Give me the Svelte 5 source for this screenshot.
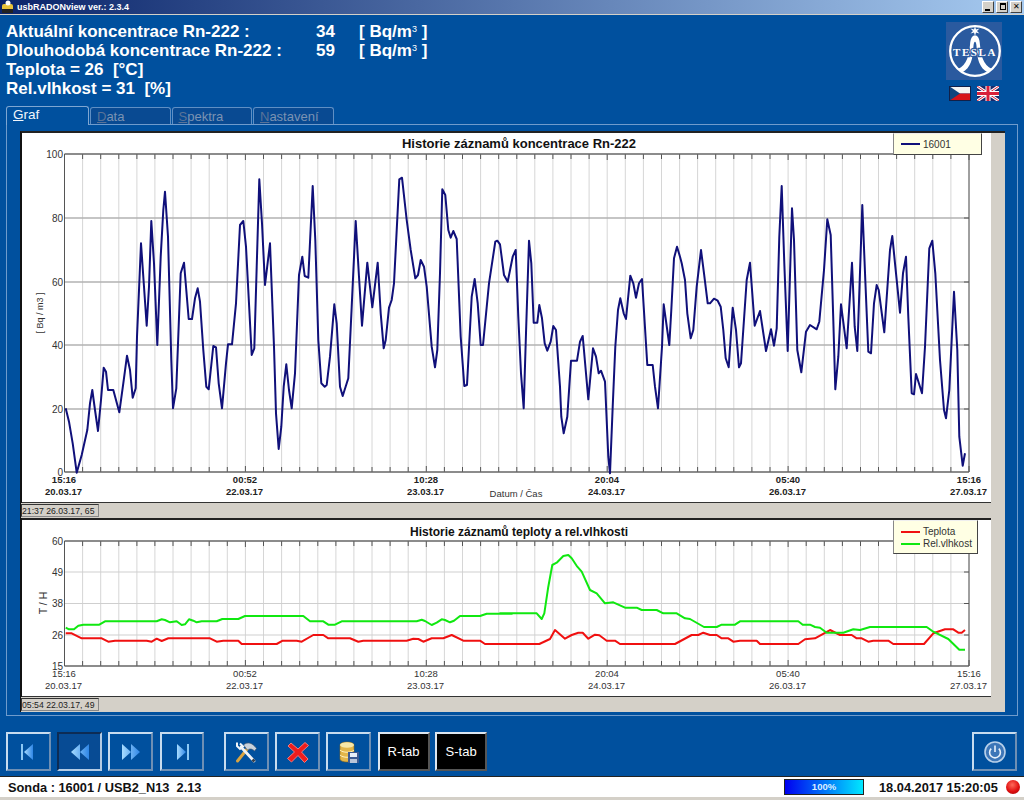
<script>
  // points read off the screen: [originX, originY, x*3, y*3, ...]
  function pts(groups) {
    return groups
      .map(([ox, oy, arr]) => {
        let out = [];
        for (let i = 0; i < arr.length; i += 2) {
          out.push((ox + arr[i] / 3).toFixed(1) + "," + (oy + arr[i + 1] / 3).toFixed(1));
        }
        return out.join(" ");
      })
      .join(" ");
  }

  const radon = pts([
    [0, 140, [197,805,207,845,218,910,230,998,245,945,262,870,270,790,277,750,285,810,294,873,303,780,311,683,318,695,324,750,340,750,358,817,370,730,381,647,390,690,398,773,407,745,411,590,423,310,432,440,440,557,447,440,454,243,462,370,472,615,482,350,490,210,495,155,504,290,514,660,519,805,529,745,542,400,552,368,566,537,576,537,585,475,593,445,600,485,610,630,619,740,626,748,640,618,648,622,656,730,666,805,678,670,684,613,696,613,708,490,720,255,730,243,738,320,755,645,763,625,770,380,778,118,786,250,795,435,810,310,822,620,828,820,836,927,844,860,851,740,859,673,867,750,875,805,885,700,897,405,907,350,914,408,925,413,938,138,946,300,955,600,964,730,974,740,980,735,990,650,1003,493,1010,550,1020,740]],
    [340, 140, [8,768,25,715,35,500,47,243,57,410,66,557,82,368,97,502,113,368,122,520,131,625,137,600,147,503,155,480,162,430,178,118,186,113,200,240,212,330,226,415,234,405,242,360,252,380,260,440,275,620,285,682,292,630,300,400,307,148,316,165,325,270,332,293,340,273,350,297,362,590,373,738,381,735,395,470,404,417,413,490,422,615,429,615,447,430,466,305,472,302,480,313,492,405,503,425,518,350,527,330,535,530,543,700,551,805,558,580,567,302,574,370,581,548,592,548,598,495,606,535,614,610,622,632,632,605,640,558,648,570,660,740,664,830,671,880,682,830,693,662,711,662,720,605,728,588,745,778,759,625,768,650,776,700,783,692,795,725,805,950,810,1000,818,800,826,620,834,510,841,475,851,520,858,537,871,407,880,430,888,473,897,430,906,417,922,675,938,675,945,740,954,805,966,620,971,493,988,615,994,510,1002,355,1011,320,1020,350]],
    [680, 130, [5,400,15,450,22,550,32,625,40,600,50,470,63,360,72,430,83,520,90,520,102,506,113,512,122,530,130,600,137,685,146,712,158,533,168,600,177,712,183,700,200,450,210,398,224,587,240,543,258,663,273,598,282,647,290,595,298,320,305,168,313,400,323,663,336,235,342,330,352,660,364,727,378,605,390,585,410,598,418,575,432,420,442,268,452,315,460,570,466,778,475,680,483,523,500,655,516,398,524,590,532,663,547,225,556,450,565,665,573,670,582,520,590,465,596,480,613,607,630,360,637,318,645,400,660,548,669,430,678,380,685,560,695,790,702,793,708,732,726,790,735,650,748,355,757,332,766,430,780,690,792,840,798,865,808,780,822,485,832,660,838,920,848,1007,855,970]]
  ]);

  const humidity = pts([
    [0, 530, [197,293,207,298,222,298,235,287,250,284,298,284,315,274,470,274,485,268,495,270,510,277,530,274,545,285,555,283,567,268,580,272,590,277,605,274,650,274,667,267,715,267,735,258,910,258,930,274,970,274,985,284,1005,284,1025,274,1250,274,1265,269,1275,273,1295,285,1310,278,1325,268,1335,270,1350,277,1362,272,1380,258,1440,258,1460,251,1536,251]],
    [500, 510, [0,310,110,310,125,327,133,310,145,230,157,165,170,158,190,138,205,135,215,145,232,170,245,185,270,240,290,250,315,280,340,277,375,293,410,293,425,300,470,300,490,310,530,310,555,325,570,327,612,351,650,351,665,344,705,344,720,334,895,334,908,344,930,344,945,351,960,353,980,368,1030,368,1060,358,1080,360,1110,351,1280,351,1300,365,1345,387,1378,419,1395,419]]
  ]);

  const temperature = pts([
    [0, 530, [197,310,215,310,245,325,305,325,325,335,345,332,440,332,455,335,470,326,485,333,505,325,630,325,650,335,670,332,715,332,725,342,830,342,848,332,890,332,905,335,940,315,970,315,985,325,1050,325,1075,335,1090,332,1220,332,1240,326,1255,327,1270,335,1295,325,1330,325,1355,315,1390,332,1440,332,1455,342,1536,342]],
    [500, 510, [0,402,118,402,150,387,165,360,195,386,215,375,235,368,248,368,265,386,285,374,298,376,320,392,345,392,360,402,525,402,575,375,595,375,610,368,630,375,650,375,665,385,685,385,700,395,720,392,770,392,780,402,895,402,915,388,945,385,990,360,1020,375,1055,375,1070,385,1085,385,1105,395,1120,392,1165,392,1180,402,1272,402,1300,370,1335,358,1360,358,1375,368,1385,368,1395,360]]
  ]);

  const x0 = 64.5;
  const step = 18.09;
  const verticals = Array.from({ length: 51 }, (_, i) => +(x0 + i * step).toFixed(1));
  const timeLabels = [
    ["15:16", "20.03.17", 64],
    ["00:52", "22.03.17", 245],
    ["10:28", "23.03.17", 426],
    ["20:04", "24.03.17", 607],
    ["05:40", "26.03.17", 788],
    ["15:16", "27.03.17", 969]
  ];

  const yTop = [
    ["100", 154], ["80", 218], ["60", 282], ["40", 345], ["20", 409], ["0", 472]
  ];
  const yBottom = [
    ["60", 541], ["49", 572], ["38", 603.5], ["26", 635], ["15", 666]
  ];

  const navButtons = ["first", "prev", "next", "last"];
</script>

{#snippet axes(top, bottom, ylabels, gridClass, labelClass)}
  {#each verticals as x, i}
    <line class="vgrid" x1={x} x2={x} y1={top} y2={bottom} />
    <line class="axis" x1={x} x2={x} y1={top} y2={top + (i % 10 === 0 ? 6 : 5)} />
    <line class="axis" x1={x} x2={x} y1={bottom} y2={bottom - (i % 10 === 0 ? 6 : 5)} />
  {/each}
  {#each ylabels as [label, y], i}
    {#if i > 0 && i < ylabels.length - 1}
      <line class={gridClass} x1={x0} x2="969" y1={y} y2={y} />
      <line class="axis" x1="964" x2="969" y1={y} y2={y} />
    {/if}
    <text class="ylabel" x="63" y={y + 3.5}>{label}</text>
  {/each}
  <line class="axis-strong" x1={x0} x2="969" y1={top} y2={top} />
  <line class="axis-strong" x1={x0} x2="969" y1={bottom} y2={bottom} />
  <line class="axis" x1={x0} x2={x0} y1={top} y2={bottom} />
  <line class="axis" x1="969" x2="969" y1={top} y2={bottom} />
  {#each timeLabels as [time, date, x]}
    <text class="xlabel {labelClass}" x={x} y={bottom + 11}>{time}</text>
    <text class="xlabel {labelClass}" x={x - 0.5} y={bottom + 22.5}>{date}</text>
  {/each}
{/snippet}

<div class="window">
  <div class="titlebar">
    <svg class="app-icon" viewBox="0 0 14 14" width="14" height="14">
      <rect x="1" y="4" width="11" height="9" rx="2" fill="#e8c23a" />
      <rect x="1" y="9" width="11" height="4" fill="#222" />
      <circle cx="7" cy="3" r="2.5" fill="#fff" />
    </svg>
    <span class="title">usbRADONview ver.: 2.3.4</span>
    <div class="caption-buttons">
      <button aria-label="min"><span class="min"></span></button>
      <button aria-label="restore"><span class="restore"></span></button>
      <button class="close">✕</button>
    </div>
  </div>

  <header class="header">
    <div class="readings">
      <div class="row"><span class="name">Aktuální koncentrace Rn-222 :</span><span class="val">34</span><span>[ Bq/m<sup>3</sup> ]</span></div>
      <div class="row"><span class="name">Dlouhodobá koncentrace Rn-222 :</span><span class="val">59</span><span>[ Bq/m<sup>3</sup> ]</span></div>
      <div>Teplota = 26&nbsp; [°C]</div>
      <div>Rel.vlhkost = 31&nbsp; [%]</div>
    </div>
    <div class="brand">
      <svg class="logo" viewBox="0 0 56 58" width="56" height="58">
        <rect width="56" height="58" fill="#2a5a9f" />
        <circle cx="29" cy="29" r="24.8" fill="none" stroke="#fff" stroke-width="2.3" />
        <path d="M12 47 C21 43 23 33 24 23 C24.5 16 26 13.5 29 13.5 C32 13.5 33.5 16 34 23 C35 33 37 43 46 47 L42 50.5 C33 46 31 36 30.6 25 C30.2 18 27.8 18 27.4 25 C27 36 25 46 16 50.5 Z" fill="#fff" />
        <path d="M29 4 L30 7.5 L33.5 6.5 L31 9 L33.5 11.5 L30 10.5 L29 14 L28 10.5 L24.5 11.5 L27 9 L24.5 6.5 L28 7.5 Z" fill="#fff" />
        <text class="logo-text" x="29" y="33.5">TESLA</text>
      </svg>
      <div class="flags">
        <svg viewBox="0 0 22 15" width="22" height="15">
          <rect width="22" height="7.5" fill="#f4f4f4" />
          <rect y="7.5" width="22" height="7.5" fill="#d7141a" />
          <path d="M0 0 L11 7.5 L0 15 Z" fill="#11457e" />
          <rect x=".5" y=".5" width="21" height="14" fill="none" stroke="#10204a" />
        </svg>
        <svg viewBox="0 0 22 15" width="22" height="15">
          <rect width="22" height="15" fill="#1b2a6b" />
          <path d="M0 0 L22 15 M22 0 L0 15" stroke="#fff" stroke-width="3" />
          <path d="M0 0 L22 15 M22 0 L0 15" stroke="#d8203a" stroke-width="1" />
          <path d="M11 0 V15 M0 7.5 H22" stroke="#fff" stroke-width="5" />
          <path d="M11 0 V15 M0 7.5 H22" stroke="#d8203a" stroke-width="3" />
        </svg>
      </div>
    </div>
  </header>

  <nav class="tabs">
    <span class="tab active"><u>G</u>raf</span>
    <span class="tab"><u>D</u>ata</span>
    <span class="tab"><u>S</u>pektra</span>
    <span class="tab"><u>N</u>astavení</span>
  </nav>

  <section class="sheet">
    <div class="panel">
      <div class="chart chart-top">
        <svg viewBox="22 133 968 369" width="968" height="369">
          <text class="chart-title" x="519" y="147.5">Historie záznamů koncentrace Rn-222</text>
          {@render axes(154, 472, yTop, "hgrid-strong", "bold")}
          <text class="yaxis-title" transform="translate(43 313) rotate(-90)">[ Bq / m3 ]</text>
          <text class="xlabel" x="516" y="497">Datum / Čas</text>
          <polyline class="trace" points={radon} stroke="#10107a" />
        </svg>
        <div class="legend legend-top">
          <span class="key" style="background:#10107a"></span>16001
        </div>
      </div>
      <div class="strip strip-top"><span class="cursor">21:37 26.03.17, 65</span></div>

      <div class="chart chart-bottom">
        <svg viewBox="22 520 968 176" width="968" height="176">
          <text class="chart-title small" x="519" y="535.5">Historie záznamů teploty a rel.vlhkosti</text>
          {@render axes(541, 666, yBottom, "hgrid", "")}
          <text class="yaxis-title big" transform="translate(47 603) rotate(-90)">T / H</text>
          <polyline class="trace" points={temperature} stroke="#f01010" />
          <polyline class="trace" points={humidity} stroke="#10e810" />
        </svg>
        <div class="legend legend-bottom">
          <div><span class="key" style="background:#f01010"></span>Teplota</div>
          <div><span class="key" style="background:#10e810"></span>Rel.vlhkost</div>
        </div>
      </div>
      <div class="strip"><span class="cursor">05:54 22.03.17, 49</span></div>
    </div>
  </section>

  <div class="toolbar">
    {#each navButtons as kind}
      <button class="tool" class:pressed={kind === "prev"} aria-label={kind}>
        <svg viewBox="0 0 24 24" width="24" height="24">
          <defs>
            <linearGradient id="nav-{kind}" x1="0" x2="1" y1="0" y2="0">
              <stop offset="0" stop-color="#a8dcff" />
              <stop offset="1" stop-color="#2f86e6" />
            </linearGradient>
          </defs>
          {#if kind === "first"}
            <rect x="5" y="4" width="2" height="16" fill="#8cc8f4" />
            <path d="M17 4 V20 L8 12 Z" fill="url(#nav-first)" />
          {:else if kind === "prev"}
            <path d="M12 4 V20 L3 12 Z M21 4 V20 L12 12 Z" fill="url(#nav-prev)" />
          {:else if kind === "next"}
            <path d="M3 4 V20 L12 12 Z M12 4 V20 L21 12 Z" fill="url(#nav-next)" />
          {:else}
            <path d="M7 4 V20 L16 12 Z" fill="url(#nav-last)" />
            <rect x="17" y="4" width="2" height="16" fill="#8cc8f4" />
          {/if}
        </svg>
      </button>
    {/each}

    <button class="tool gap-left" aria-label="tools">
      <svg viewBox="0 0 24 24" width="24" height="24">
        <path d="M3.5 21 L14 8" stroke="#d9a441" stroke-width="3" stroke-linecap="round" />
        <path d="M9.5 5 C13 1.5 18.5 2.5 22.5 8.5 L20.5 11 C18 8.5 15.5 8.5 13.5 10 Z" fill="#c9d2dc" stroke="#4a5564" stroke-width=".6" />
        <path d="M20 21 L7 7" stroke="#eef1f5" stroke-width="2.8" stroke-linecap="round" />
        <path d="M3 2.5 L3 6 L6 9 L9 6.5 L6 3.5" fill="none" stroke="#f2f5f8" stroke-width="2" />
        <path d="M18.5 19.5 L20.5 21.5" stroke="#39404a" stroke-width="2.8" />
      </svg>
    </button>
    <button class="tool" aria-label="delete">
      <svg viewBox="0 0 24 24" width="24" height="24">
        <path d="M5 3 L12 9 L19 2.5 L22.5 5.5 L15.5 12 L22 19 L18.5 22.5 L12 15.5 L5.5 22 L1.5 18.5 L8.5 12 L2 6 Z" fill="#ee1c1c" stroke="#f47a7a" stroke-width="1" stroke-linejoin="round" />
      </svg>
    </button>
    <button class="tool" aria-label="save">
      <svg viewBox="0 0 24 24" width="24" height="24">
        <path d="M3 5 C3 1 17 1 17 5 V19 C17 23 3 23 3 19 Z" fill="#e3b64a" stroke="#8a6a20" stroke-width=".6" />
        <ellipse cx="10" cy="5" rx="7" ry="2.8" fill="#f8e8a8" />
        <path d="M3 10 C6 13 14 13 17 10 M3 15 C6 18 14 18 17 15" stroke="#fff2c0" fill="none" />
        <rect x="11" y="12" width="11" height="11" fill="#3c5a92" />
        <rect x="13" y="13" width="7" height="4" fill="#e8eef8" />
        <rect x="13" y="19" width="7" height="4" fill="#b8c4d8" />
      </svg>
    </button>
    <button class="tool black">R-tab</button>
    <button class="tool black s-tab">S-tab</button>

    <button class="tool flat power" aria-label="power">
      <svg viewBox="0 0 24 24" width="24" height="24">
        <circle cx="12" cy="12" r="10" fill="#3d76b8" stroke="#b8d0ea" stroke-width="1.6" />
        <path d="M8.2 8.6 A5.4 5.4 0 1 0 15.8 8.6" fill="none" stroke="#e8f1fa" stroke-width="1.6" />
        <path d="M12 5.6 V12" stroke="#e8f1fa" stroke-width="1.6" />
      </svg>
    </button>
  </div>

  <footer class="statusbar">
    <span class="probe">Sonda : 16001 / USB2_N13&nbsp; 2.13</span>
    <span class="progress">100%</span>
    <span class="clock">18.04.2017 15:20:05</span>
    <span class="led"></span>
  </footer>
</div>

<style>
  :global(body) {
    margin: 0;
    overflow: hidden;
  }

  .window {
    width: 1024px;
    height: 800px;
    display: flex;
    flex-direction: column;
    background: #00509e;
    font-family: "Liberation Sans", Arial, sans-serif;
    overflow: hidden;
  }

  .titlebar {
    height: 14px;
    flex: none;
    display: flex;
    align-items: center;
    gap: 2px;
    background: linear-gradient(90deg, #0a246a, #a6caf0);
    border-bottom: 1px solid #d4d0c8;
    color: #fff;
    font-size: 9px;
    font-weight: bold;
  }

  .app-icon {
    margin-left: 1px;
  }

  .caption-buttons {
    margin-left: auto;
    margin-right: 2px;
    display: flex;
    gap: 2px;
  }

  .caption-buttons button {
    width: 12px;
    height: 12px;
    padding: 0;
    margin: 0;
    border: 1px solid;
    border-color: #fff #404040 #404040 #fff;
    background: #d4d0c8;
    position: relative;
    font-size: 8px;
    line-height: 8px;
    color: #000;
    font-family: inherit;
  }

  .min {
    position: absolute;
    left: 2px;
    bottom: 1px;
    width: 5px;
    height: 2px;
    background: #000;
  }

  .restore {
    position: absolute;
    left: 3px;
    top: 1px;
    width: 4px;
    height: 4px;
    border: 1px solid #000;
    border-top-width: 2px;
  }

  .header {
    height: 90px;
    flex: none;
    box-sizing: border-box;
    display: flex;
    justify-content: space-between;
    padding: 7px 22px 0 6px;
    color: #fff;
    font-size: 17px;
    font-weight: bold;
    line-height: 19px;
  }

  .row {
    display: flex;
  }

  .name {
    width: 310px;
  }

  .val {
    width: 43px;
  }

  sup {
    font-size: 9px;
    font-weight: normal;
    line-height: 0;
    vertical-align: 5px;
  }

  .brand {
    width: 56px;
    display: flex;
    flex-direction: column;
    align-items: center;
  }

  .logo {
    display: block;
  }

  .logo-text {
    fill: #fff;
    font-family: "Liberation Serif", serif;
    font-size: 11px;
    font-weight: bold;
    text-anchor: middle;
    letter-spacing: 1.6px;
    stroke: #2a5a9f;
    stroke-width: 2.5px;
    paint-order: stroke;
  }

  .flags {
    display: flex;
    gap: 6px;
    margin-top: 6px;
  }

  .flags svg {
    display: block;
  }

  .tabs {
    height: 19px;
    flex: none;
    display: flex;
    align-items: flex-end;
    gap: 1px;
    padding-left: 6px;
    position: relative;
    z-index: 1;
    box-sizing: border-box;
  }

  .tab {
    width: 80.5px;
    height: 17px;
    box-sizing: border-box;
    border: 1px solid #5f8fc4;
    border-bottom: 0;
    border-radius: 3px 3px 0 0;
    background: #094a92;
    color: #7b93b2;
    font-size: 13px;
    line-height: 17px;
    padding-left: 6px;
  }

  .tab u {
    color: #5a7398;
  }

  .tab.active {
    width: 83px;
    height: 19px;
    margin-bottom: -1px;
    background: #00509e;
    color: #f2f6fb;
    font-size: 13.5px;
    line-height: 16px;
    border-color: #7ea6d2;
  }

  .tab.active u {
    color: #f2f6fb;
  }

  .sheet {
    height: 592px;
    flex: none;
    box-sizing: border-box;
    margin: 0 6px 0 6px;
    padding: 6px 12px 3px 13px;
    border: 1px solid #6f9bcc;
  }

  .panel {
    width: 985px;
    height: 581px;
    box-sizing: border-box;
    background: #d4d0c8;
    border-left: 2px solid #111;
    border-top: 2px solid #222;
    padding-right: 14px;
    display: flex;
    flex-direction: column;
  }

  .chart {
    position: relative;
    background: #fff;
    flex: none;
  }

  .chart svg {
    display: block;
  }

  .chart-top {
    height: 369px;
    border-bottom: 1px solid #333;
  }

  .chart-bottom {
    height: 176px;
    border-top: 2px solid #222;
    border-bottom: 1px solid #333;
  }

  .strip {
    height: 14px;
    flex: none;
    background: #d4d0c8;
    padding-top: 1px;
    margin-left: -1px;
  }

  .cursor {
    display: block;
    width: 78px;
    height: 13px;
    box-sizing: border-box;
    border: 1px solid;
    border-color: #333 #888 #888 #333;
    font-size: 8.7px;
    line-height: 12px;
    color: #222;
    white-space: nowrap;
    overflow: hidden;
  }

  .vgrid {
    stroke: #d6d6d6;
    stroke-width: 1;
  }

  .hgrid-strong {
    stroke: #b2b2b2;
    stroke-width: 1.5;
  }

  .hgrid {
    stroke: #cfcfcf;
    stroke-width: 1;
  }

  .axis {
    stroke: #555;
    stroke-width: 1;
  }

  .axis-strong {
    stroke: #666;
    stroke-width: 1.5;
  }

  .trace {
    fill: none;
    stroke-width: 2;
    stroke-linejoin: round;
  }

  .chart-title {
    font-size: 13px;
    font-weight: bold;
    text-anchor: middle;
    fill: #111;
  }

  .chart-title.small {
    font-size: 12px;
  }

  .ylabel {
    font-size: 10px;
    text-anchor: end;
    fill: #333;
  }

  .xlabel {
    font-size: 9.5px;
    text-anchor: middle;
    fill: #333;
  }

  .xlabel.bold {
    font-weight: bold;
    fill: #222;
  }

  .yaxis-title {
    font-size: 9px;
    text-anchor: middle;
    fill: #333;
  }

  .yaxis-title.big {
    font-size: 10.5px;
  }

  .legend {
    position: absolute;
    box-sizing: border-box;
    background: #ffffe4;
    border: 1px solid;
    border-color: #eee #444 #444 #888;
    font-size: 10px;
    color: #333;
  }

  .legend-top {
    left: 871px;
    top: 0;
    width: 89px;
    height: 22px;
    padding-left: 7px;
    display: flex;
    align-items: center;
  }

  .legend-bottom {
    left: 871px;
    top: 0;
    width: 85px;
    height: 34px;
    padding: 5px 0 0 7px;
    line-height: 12px;
  }

  .legend-bottom div {
    display: flex;
    align-items: center;
  }

  .key {
    display: inline-block;
    width: 19px;
    height: 2px;
    margin-right: 3px;
  }

  .toolbar {
    height: 39px;
    flex: none;
    display: flex;
    gap: 6.4px;
    margin-top: 16px;
    padding: 0 7px 0 6px;
  }

  .tool {
    width: 44.8px;
    height: 39px;
    box-sizing: border-box;
    padding: 0;
    margin: 0;
    background: #00509e;
    border: 2px solid;
    border-color: #c8dcef #6e8fb4 #6e8fb4 #c8dcef;
    display: flex;
    align-items: center;
    justify-content: center;
    font-family: inherit;
    color: #fff;
    font-size: 13px;
  }

  .tool.pressed {
    border-color: #0d2c55 #b4cbe4 #b4cbe4 #0d2c55;
    background: #074b94;
  }

  .tool.gap-left {
    margin-left: 13.2px;
  }

  .tool.black {
    width: 52px;
    background: #000;
    border-color: #dce6f0 #555 #555 #dce6f0;
  }

  .tool.s-tab {
    margin-left: -0.8px;
  }

  .tool.power {
    margin-left: auto;
  }

  .statusbar {
    height: 24px;
    flex: none;
    margin-top: 5px;
    box-sizing: border-box;
    display: flex;
    align-items: center;
    background: #fff;
    border-top: 1px solid #222;
    border-bottom: 3px solid #d4d0c8;
    font-size: 12.8px;
    font-weight: bold;
    color: #111;
    padding-left: 8px;
  }

  .probe {
    width: 776px;
    flex: none;
  }

  .progress {
    width: 80px;
    height: 16px;
    flex: none;
    box-sizing: border-box;
    border: 1px solid #222;
    background: linear-gradient(90deg, #0000f0, #00e8ff);
    color: #dcefff;
    font-size: 9.5px;
    line-height: 14px;
    text-align: center;
  }

  .clock {
    margin-left: 15px;
    width: 127px;
    flex: none;
    white-space: nowrap;
  }

  .led {
    width: 14px;
    height: 14px;
    flex: none;
    border-radius: 50%;
    background: radial-gradient(circle at 45% 35%, #ff6a5a, #e01010 55%, #900);
  }
</style>
